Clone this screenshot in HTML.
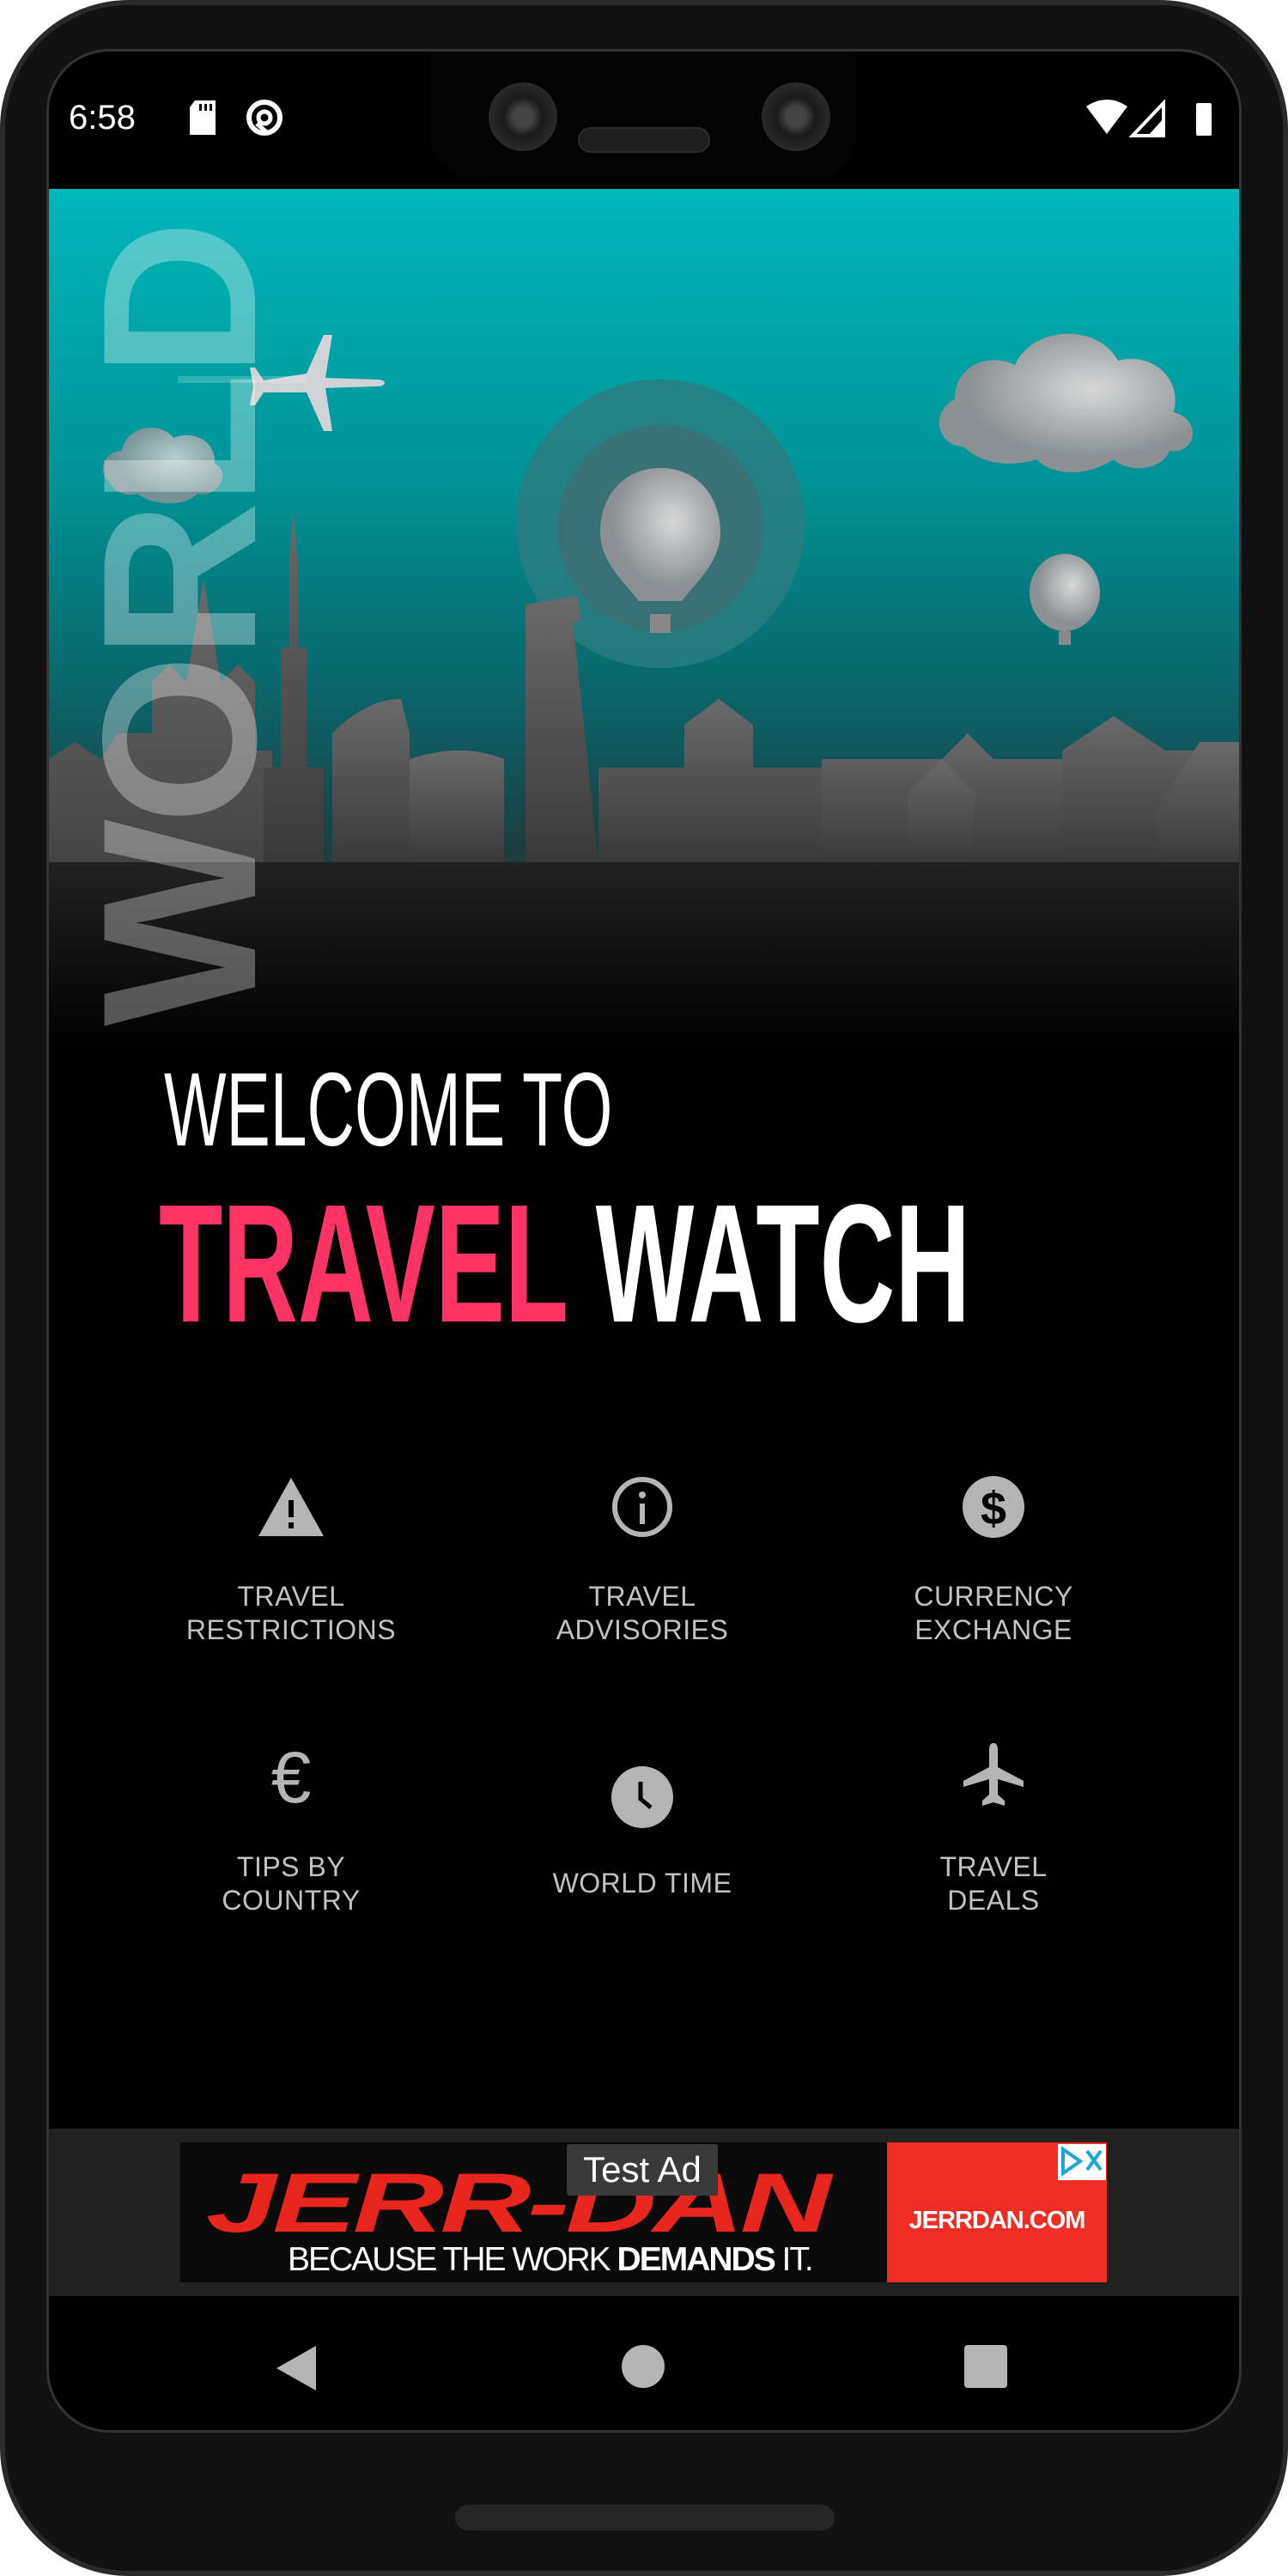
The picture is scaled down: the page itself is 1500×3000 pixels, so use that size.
<!DOCTYPE html>
<html><head><meta charset="utf-8"><style>
*{margin:0;padding:0;box-sizing:border-box}
html,body{width:1500px;height:3000px;background:#fff;overflow:hidden;font-family:"Liberation Sans",sans-serif}
.abs{position:absolute}
#phone{left:0;top:0;width:1500px;height:3000px;background:#111;border-radius:150px;border:6px solid #2a2a2a}
#screen{left:57px;top:60px;width:1386px;height:2770px;background:#000;border-radius:70px;overflow:hidden;box-shadow:0 0 0 3px #333}
.lbl{position:absolute;width:400px;text-align:center;color:#c2c2c2;font-size:32px;line-height:39px;letter-spacing:0.5px}
.ico{position:absolute}
</style></head><body>
<div id="phone" class="abs"></div>
<div id="screen" class="abs">
  <div class="abs" style="left:23px;top:55px;color:#fff;font-size:40px">6:58</div>
  <svg class="abs" style="left:160px;top:55px" width="40" height="44" viewBox="0 0 40 44"><path d="M10 2h24v40H4V10z" fill="#fff"/><rect x="15" y="6" width="3" height="8" fill="#000"/><rect x="21" y="6" width="3" height="8" fill="#000"/><rect x="27" y="6" width="3" height="8" fill="#000"/></svg>
  <svg class="abs" style="left:228px;top:54px" width="46" height="46" viewBox="0 0 46 46"><circle cx="23" cy="23" r="18" fill="none" stroke="#fff" stroke-width="6"/><circle cx="23" cy="23" r="7" fill="none" stroke="#fff" stroke-width="5"/><path d="M14 30l14 12" stroke="#fff" stroke-width="5"/></svg>
  <svg class="abs" style="left:1208px;top:56px" width="150" height="46" viewBox="0 0 150 46"><path d="M0 8q24-16 48 0L24 40z" fill="#fff"/><path d="M90 4v38H54z" fill="none" stroke="#fff" stroke-width="4"/><path d="M90 22v20H72z" fill="#fff"/><rect x="128" y="4" width="18" height="38" rx="2" fill="#fff"/></svg>
  <div class="abs" style="left:444px;top:-20px;width:498px;height:175px;background:#030303;border-radius:0 0 60px 60px"></div>
  <div class="abs" style="left:512px;top:36px;width:80px;height:80px;border-radius:50%;background:radial-gradient(#444 0 20%,#1a1a1a 40%,#2a2a2a 70%,#111)"></div>
  <div class="abs" style="left:830px;top:36px;width:80px;height:80px;border-radius:50%;background:radial-gradient(#444 0 20%,#1a1a1a 40%,#2a2a2a 70%,#111)"></div>
  <div class="abs" style="left:616px;top:88px;width:154px;height:30px;border-radius:15px;background:#1e1e1e;border:2px solid #2c2c2c"></div>

  <svg class="abs" style="left:0;top:160px" width="1386" height="1000" viewBox="0 0 1386 1000">
    <defs>
      <linearGradient id="sky" x1="0" y1="0" x2="0" y2="1">
        <stop offset="0" stop-color="#00b7bb"/><stop offset="0.35" stop-color="#009195"/><stop offset="0.6" stop-color="#0b6266"/><stop offset="0.78" stop-color="#1e3c3e"/><stop offset="1" stop-color="#000"/>
      </linearGradient>
      <linearGradient id="bld" x1="0" y1="0" x2="0" y2="1"><stop offset="0" stop-color="#6a6a6a"/><stop offset="1" stop-color="#3a3a3a"/></linearGradient>
      <linearGradient id="fade" x1="0" y1="0" x2="0" y2="1"><stop offset="0" stop-color="#222"/><stop offset="1" stop-color="#000"/></linearGradient>
      <radialGradient id="cl" cx="0.6" cy="0.4"><stop offset="0" stop-color="#d8d8d8"/><stop offset="1" stop-color="#8a9094"/></radialGradient>
    </defs>
    <rect width="1386" height="1000" fill="url(#sky)"/>
    <circle cx="712" cy="390" r="168" fill="#2a7d80" opacity="0.85"/>
    <circle cx="712" cy="395" r="120" fill="#3a7073" opacity="0.9"/>
    <path d="M712 325c-45 0-70 35-70 75 0 35 30 60 45 80h50c15-20 45-45 45-80 0-40-25-75-70-75z" fill="url(#cl)"/>
    <rect x="700" y="495" width="24" height="22" fill="#888"/>
    <g transform="translate(35,-120)">
    <path d="M1030 420c-30 0-40-40-10-55 0-40 40-55 70-40 20-45 95-50 120-5 40-10 75 20 65 60 35 10 25 50-5 45-10 25-50 25-65 10-30 20-70 20-90 0-30 10-65 5-85-15z" fill="url(#cl)"/></g>
    <g transform="translate(40,40)">
    <path d="M30 300c-15-10-5-35 15-35 5-30 45-35 60-15 25-10 50 5 48 30 20 10 5 40-20 35-15 15-50 15-70 0-15 5-30-5-33-15z" fill="url(#cl)" opacity="0.85"/></g>
    <ellipse cx="1183" cy="470" rx="41" ry="45" fill="url(#cl)"/>
    <rect x="1176" y="515" width="14" height="16" fill="#888"/>
    <g transform="translate(90,-180)">
    <path d="M210 395l20-45 10 0-8 50 60 2c12 0 12 8 0 8l-60 2 8 50-10 0-20-45-50 0-10 15-6 0 4-22-4-22 6 0 10 15z" fill="#cfd3d5"/>
    <rect x="60" y="398" width="150" height="8" fill="#fff" opacity="0.2"/></g>
    <g fill="url(#bld)" transform="translate(0,-46)">
      <path d="M0 830v-120l30-20 30 20 20-30 40 0v-60l20-20 20 20 20-120 20 120 20-20 20 20v80l20 0v220z"/>
      <path d="M250 830v-110h20v-140h10v-100l5-60 5 60v100h10v140h20v110z"/>
      <path d="M330 830v-150q40-40 80-40l10 40v150z"/>
      <path d="M420 830v-120q60-20 110 0v120z"/>
      <path d="M555 830v-300l60-10 5 30-10 0 30 280z"/>
      <path d="M640 830v-110h100v-50l40-30 40 30v50h100v110z"/>
      <path d="M900 830v-120h140l30-30 30 30h100v120z"/>
      <path d="M1000 830v-80l40-40 40 40-10 80z"/>
      <path d="M1180 830v-130l60-40 60 40 86 0v130z"/>
      <path d="M1290 830v-60l50-80 46 0v140z"/>
    </g>
    <rect x="0" y="784" width="1386" height="216" fill="url(#fade)"/>
    <text transform="translate(240,975) rotate(-90)" font-family="Liberation Sans" font-weight="bold" font-size="255" fill="#ffffff" fill-opacity="0.32" letter-spacing="-6">WORLD</text>
  </svg>

  <div class="abs" style="left:134px;top:1162px;color:#fff;font-size:122px;line-height:140px;white-space:nowrap;transform:scaleX(0.63);transform-origin:left top">WELCOME TO</div>
  <div class="abs" style="left:128px;top:1302px;font-size:196px;line-height:220px;font-weight:bold;white-space:nowrap;transform:scaleX(0.62);transform-origin:left top"><span style="color:#ff3466">TRAVEL</span> <span style="color:#fff">WATCH</span></div>

  <svg class="ico" style="left:242px;top:1657px" width="80" height="76" viewBox="0 0 80 76"><path d="M40 4L78 72H2z" fill="#b5b5b5"/><rect x="37" y="30" width="6" height="20" fill="#000"/><rect x="37" y="56" width="6" height="7" fill="#000"/></svg>
  <svg class="ico" style="left:653px;top:1657px" width="76" height="76" viewBox="0 0 76 76"><circle cx="38" cy="38" r="32" fill="none" stroke="#b5b5b5" stroke-width="6"/><rect x="35" y="34" width="6" height="24" fill="#b5b5b5"/><circle cx="38" cy="24" r="4" fill="#b5b5b5"/></svg>
  <svg class="ico" style="left:1062px;top:1657px" width="76" height="76" viewBox="0 0 76 76"><circle cx="38" cy="38" r="36" fill="#b5b5b5"/><text x="38" y="58" text-anchor="middle" font-family="Liberation Sans" font-weight="bold" font-size="54" fill="#000">$</text></svg>
  <div class="lbl" style="left:82px;top:1780px">TRAVEL<br>RESTRICTIONS</div>
  <div class="lbl" style="left:491px;top:1780px">TRAVEL<br>ADVISORIES</div>
  <div class="lbl" style="left:900px;top:1780px">CURRENCY<br>EXCHANGE</div>

  <div class="ico" style="left:242px;top:1965px;width:80px;text-align:center;color:#b5b5b5;font-size:84px;line-height:90px">€</div>
  <svg class="ico" style="left:653px;top:1995px" width="76" height="76" viewBox="0 0 76 76"><circle cx="38" cy="38" r="36" fill="#b5b5b5"/><path d="M36 20v20l12 10" stroke="#000" stroke-width="5" fill="none"/></svg>
  <svg class="ico" style="left:1060px;top:1968px" width="80" height="80" viewBox="0 0 80 80"><path d="M40 2c4 0 5 4 5 8v20l30 16v7l-30-9v18l8 7v6l-13-4-13 4v-6l8-7V44L5 53v-7l30-16V10c0-4 1-8 5-8z" fill="#b5b5b5"/></svg>
  <div class="lbl" style="left:82px;top:2095px">TIPS BY<br>COUNTRY</div>
  <div class="lbl" style="left:491px;top:2114px">WORLD TIME</div>
  <div class="lbl" style="left:900px;top:2095px">TRAVEL<br>DEALS</div>

  <div class="abs" style="left:0;top:2419px;width:1386px;height:195px;background:#212121"></div>
  <div class="abs" style="left:153px;top:2435px;width:823px;height:163px;background:#0a0a0a"></div>
  <div class="abs" style="left:183px;top:2460px;color:#e8261e;font-size:98px;font-weight:bold;font-style:italic;white-space:nowrap;transform:scaleX(1.5);transform-origin:left top;line-height:90px;letter-spacing:-3px">JERR-DAN</div>
  <div class="abs" style="left:278px;top:2550px;color:#fff;font-size:39px;white-space:nowrap;letter-spacing:-2px">BECAUSE THE WORK <b>DEMANDS</b> IT.</div>
  <div class="abs" style="left:603px;top:2437px;width:176px;height:60px;background:#3a3a3a;color:#fff;font-size:42px;line-height:60px;text-align:center;border-radius:3px">Test Ad</div>
  <div class="abs" style="left:976px;top:2435px;width:256px;height:163px;background:#ee2d24"></div>
  <div class="abs" style="left:976px;top:2510px;width:256px;text-align:center;color:#fff;font-size:29px;font-weight:bold;letter-spacing:-1px">JERRDAN.COM</div>
  <svg class="abs" style="left:1175px;top:2437px" width="56" height="42" viewBox="0 0 56 42"><rect width="56" height="42" fill="#fff"/><path d="M6 6v28l20-14z" fill="none" stroke="#1aa5d8" stroke-width="4"/><path d="M34 8l16 22M50 8L34 30" stroke="#1aa5d8" stroke-width="4"/></svg>

  <svg class="abs" style="left:263px;top:2670px" width="50" height="56" viewBox="0 0 50 56"><path d="M48 2v52L2 28z" fill="#b5b5b5"/></svg>
  <div class="abs" style="left:667px;top:2671px;width:50px;height:50px;border-radius:50%;background:#b5b5b5"></div>
  <div class="abs" style="left:1066px;top:2671px;width:50px;height:50px;border-radius:4px;background:#b5b5b5"></div>
</div>
<div class="abs" style="left:530px;top:2917px;width:442px;height:30px;border-radius:15px;background:#262626"></div>
</body></html>
